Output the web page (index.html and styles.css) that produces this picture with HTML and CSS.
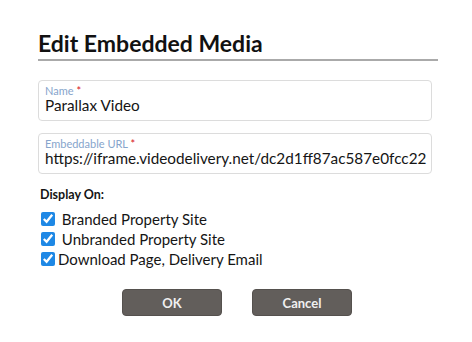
FILE: index.html
```html
<!DOCTYPE html>
<html>
<head>
<meta charset="utf-8">
<link rel="stylesheet" href="styles.css">
</head>
<body>
<div class="dialog">
  <h1 class="title">Edit Embedded Media</h1>
  <div class="field field-name">
    <label class="field-label">Name <span class="req">*</span></label>
    <div class="field-value">Parallax Video</div>
  </div>
  <div class="field field-url">
    <label class="field-label">Embeddable URL <span class="req">*</span></label>
    <div class="field-value">https://iframe.videodelivery.net/dc2d1ff87ac587e0fcc22</div>
  </div>
  <div class="display-label">Display On:</div>
  <div class="checks">
    <label class="check"><input type="checkbox" checked> Branded Property Site</label>
    <label class="check"><input type="checkbox" checked> Unbranded Property Site</label>
    <label class="check"><input type="checkbox" checked>Download Page, Delivery Email</label>
  </div>
  <div class="buttons">
    <button class="btn">OK</button>
    <button class="btn">Cancel</button>
  </div>
</div>
</body>
</html>
```
FILE: styles.css
```css
html, body {
  margin: 0;
  padding: 0;
  background: #fff;
}
body {
  font-family: Lato, "Noto Sans", sans-serif;
  color: #151515;
}
.dialog {
  padding: 28px 34px 0 38px;
  width: 400px;
}
.title {
  margin: 0;
  font-size: 23px;
  font-weight: 700;
  line-height: 30px;
  border-bottom: 2px solid #aaa;
  height: 31px;
  color: #111;
}
.field {
  box-sizing: border-box;
  width: 394px;
  height: 41px;
  border: 1px solid #dcdcdc;
  border-radius: 4px;
  padding: 4px 3px 0 6px;
}
.field-name {
  margin-top: 19px;
}
.field-url {
  margin-top: 12px;
}
.field-label {
  display: block;
  font-size: 11px;
  line-height: 12px;
  color: #86a5cc;
}
.req {
  color: #d9151b;
}
.field-value {
  font-size: 15.3px;
  line-height: 16px;
  color: #151515;
  white-space: nowrap;
}
.display-label {
  margin-top: 13px;
  margin-left: 2px;
  font-size: 12.5px;
  font-weight: 700;
  line-height: 16px;
}
.checks {
  display: flex;
  flex-direction: column;
  margin-top: 6px;
  margin-left: 3px;
}
.check {
  display: flex;
  align-items: center;
  height: 20px;
  line-height: 20px;
  font-size: 15px;
  white-space: pre;
}
.check input {
  margin: 0 3px 0 0;
  width: 14px;
  height: 14px;
  accent-color: #1e88e5;
}
.buttons {
  display: flex;
  gap: 30px;
  margin-top: 20px;
  margin-left: 84px;
}
.btn {
  width: 100px;
  height: 27px;
  border: 1px solid #55514e;
  border-radius: 4px;
  background: #625e5b;
  color: #f0f0f0;
  font-family: Lato, "Noto Sans", sans-serif;
  font-weight: 700;
  font-size: 13px;
  padding: 0;
}
```
